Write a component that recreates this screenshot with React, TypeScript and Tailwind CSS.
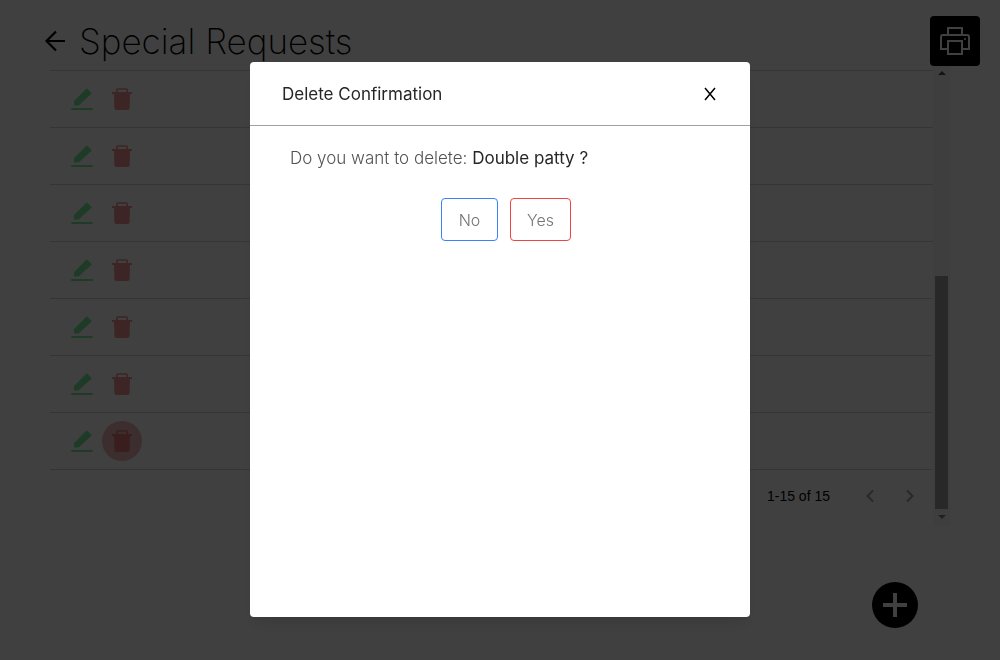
import React from "react";

const rows = [1, 2, 3, 4, 5, 6, 7];

function EditIcon() {
  return (
    <svg width="24" height="24" viewBox="0 0 24 24" fill="none" aria-hidden="true">
      <path d="M4 18v-4L16 2q.8-.8 1.600 0l3.600 3.400q.8.8 0 1.600L9.200 18q-.5.4-1 .4H4.400Q4 18.400 4 18z" fill="#78eaa0" />
      <path d="M2 22h20" stroke="#78eaa0" strokeWidth="2" strokeLinecap="round" />
    </svg>
  );
}

function TrashIcon({ active }: { active: boolean }) {
  const color = active ? "#e87878" : "#f29292";
  return (
    <svg width="24" height="24" viewBox="0 0 24 24" fill="none" aria-hidden="true">
      <path d="M2 6h20" stroke={color} strokeWidth="2" />
      <path d="M6.800 6V3q0-1 1-1h8.400q1 0 1 1v3" stroke={color} strokeWidth="1.600" />
      <path d="M4 6h16l-.4 15q-.1 2-2 2H6.400q-1.900 0-2-2z" fill={color} />
    </svg>
  );
}

export default function App() {
  return (
    <div className="relative min-h-screen bg-white font-['Inter',sans-serif] font-light text-black">
      <div className="pt-4">
        <header className="flex h-[50px] items-center pr-5 pl-[43px]">
          <button aria-label="Back" className="mr-3">
            <svg width="24" height="24" viewBox="0 0 24 24" fill="none" stroke="currentColor" strokeWidth="2.200" aria-hidden="true">
              <path d="M22 12H3M13 2.500 3.500 12l9.500 9.500" />
            </svg>
          </button>
          <h1 className="grow text-[35px] leading-10 font-extralight">Special Requests</h1>
          <button aria-label="Print" className="flex size-[50px] items-center justify-center rounded bg-black text-white">
            <svg width="32" height="32" viewBox="0 0 32 32" fill="none" stroke="currentColor" strokeWidth="2" aria-hidden="true">
              <path d="M9 10V3h14v7M8 24H2V12q0-2 2-2h24q2 0 2 2v12h-6M9 16h14v13H9z" />
              <circle cx="26" cy="14" r="1" fill="currentColor" stroke="none" />
            </svg>
          </button>
        </header>

        <main className="flex px-[50px]">
          <div className="grow pt-1">
            <table className="w-full border-collapse border-t border-neutral-300">
              <tbody>
                {rows.map((row) => (
                  <tr key={row} className="h-[57px] border-b border-neutral-300">
                    <td className="p-0">
                      <div className="flex pl-3">
                        <button aria-label="Edit request" className="flex size-10 items-center justify-center rounded-full"><EditIcon /></button>
                        <button
                          aria-label="Delete request"
                          className={row === 7 ? "flex size-10 items-center justify-center rounded-full bg-[#f0b8b8]" : "flex size-10 items-center justify-center rounded-full"}
                        >
                          <TrashIcon active={row === 7} />
                        </button>
                      </div>
                    </td>
                  </tr>
                ))}
              </tbody>
            </table>
            <div className="flex h-14 items-start justify-end pr-[3px] pt-1.5">
              <span className="mr-5 font-['Liberation_Sans',sans-serif] text-sm leading-10 font-normal">1-15 of 15</span>
              <button aria-label="Previous page" className="flex size-10 items-center justify-center text-neutral-400">
                <svg width="24" height="24" viewBox="0 0 24 24" fill="none" stroke="currentColor" strokeWidth="2" aria-hidden="true"><path d="m15 6.500-5.500 5.500 5.500 5.500" /></svg>
              </button>
              <button aria-label="Next page" className="flex size-10 items-center justify-center text-neutral-400">
                <svg width="24" height="24" viewBox="0 0 24 24" fill="none" stroke="currentColor" strokeWidth="2" aria-hidden="true"><path d="m9 6.500 5.500 5.500L9 17.500" /></svg>
              </button>
            </div>
          </div>
          <div className="flex w-[17px] shrink-0 flex-col items-center bg-neutral-100 pt-1 pb-1.5" aria-hidden="true">
            <svg width="8" height="5" viewBox="0 0 8 5"><path d="m0 5 4-4 4 4z" fill="#505050" /></svg>
            <div className="mt-auto mb-1.5 h-[233px] w-[13px] bg-neutral-400" />
            <svg width="8" height="5" viewBox="0 0 8 5"><path d="m0 0 4 4 4-4z" fill="#808080" /></svg>
          </div>
        </main>
      </div>

      <button aria-label="Add request" className="fixed right-[82px] bottom-8 flex size-[46px] items-center justify-center rounded-full bg-black text-white">
        <svg width="24" height="24" viewBox="0 0 24 24" stroke="currentColor" strokeWidth="4" aria-hidden="true"><path d="M12 0v24M0 12h24" /></svg>
      </button>

      <div className="fixed inset-0 flex items-start justify-center bg-black/75 pt-[62px]">
        <div role="dialog" aria-modal="true" aria-labelledby="dialog-title" className="min-h-[555px] w-[500px] rounded bg-white shadow-lg">
          <div className="flex h-16 items-center justify-between border-b border-neutral-400 px-8">
            <h2 id="dialog-title" className="text-[17px] leading-6 font-normal text-neutral-800">Delete Confirmation</h2>
            <button aria-label="Close" className="flex size-4 items-center justify-center">
              <svg width="12" height="14" viewBox="0 0 12 14" stroke="currentColor" strokeWidth="1.500" aria-hidden="true"><path d="m1 1 10 12M11 1 1 13" /></svg>
            </button>
          </div>
          <div className="px-10 pt-5">
            <p className="text-[17px] leading-6 text-neutral-600">
              Do you want to delete: <span className="font-normal text-neutral-800">Double patty ?</span>
            </p>
            <div className="mt-7 flex justify-center gap-3 pl-3">
              <button className="h-[43px] w-[57px] rounded border border-[#3b82f6] text-neutral-500">No</button>
              <button className="h-[43px] w-[61px] rounded border border-[#ef4444] text-neutral-500">Yes</button>
            </div>
          </div>
        </div>
      </div>
    </div>
  );
}
